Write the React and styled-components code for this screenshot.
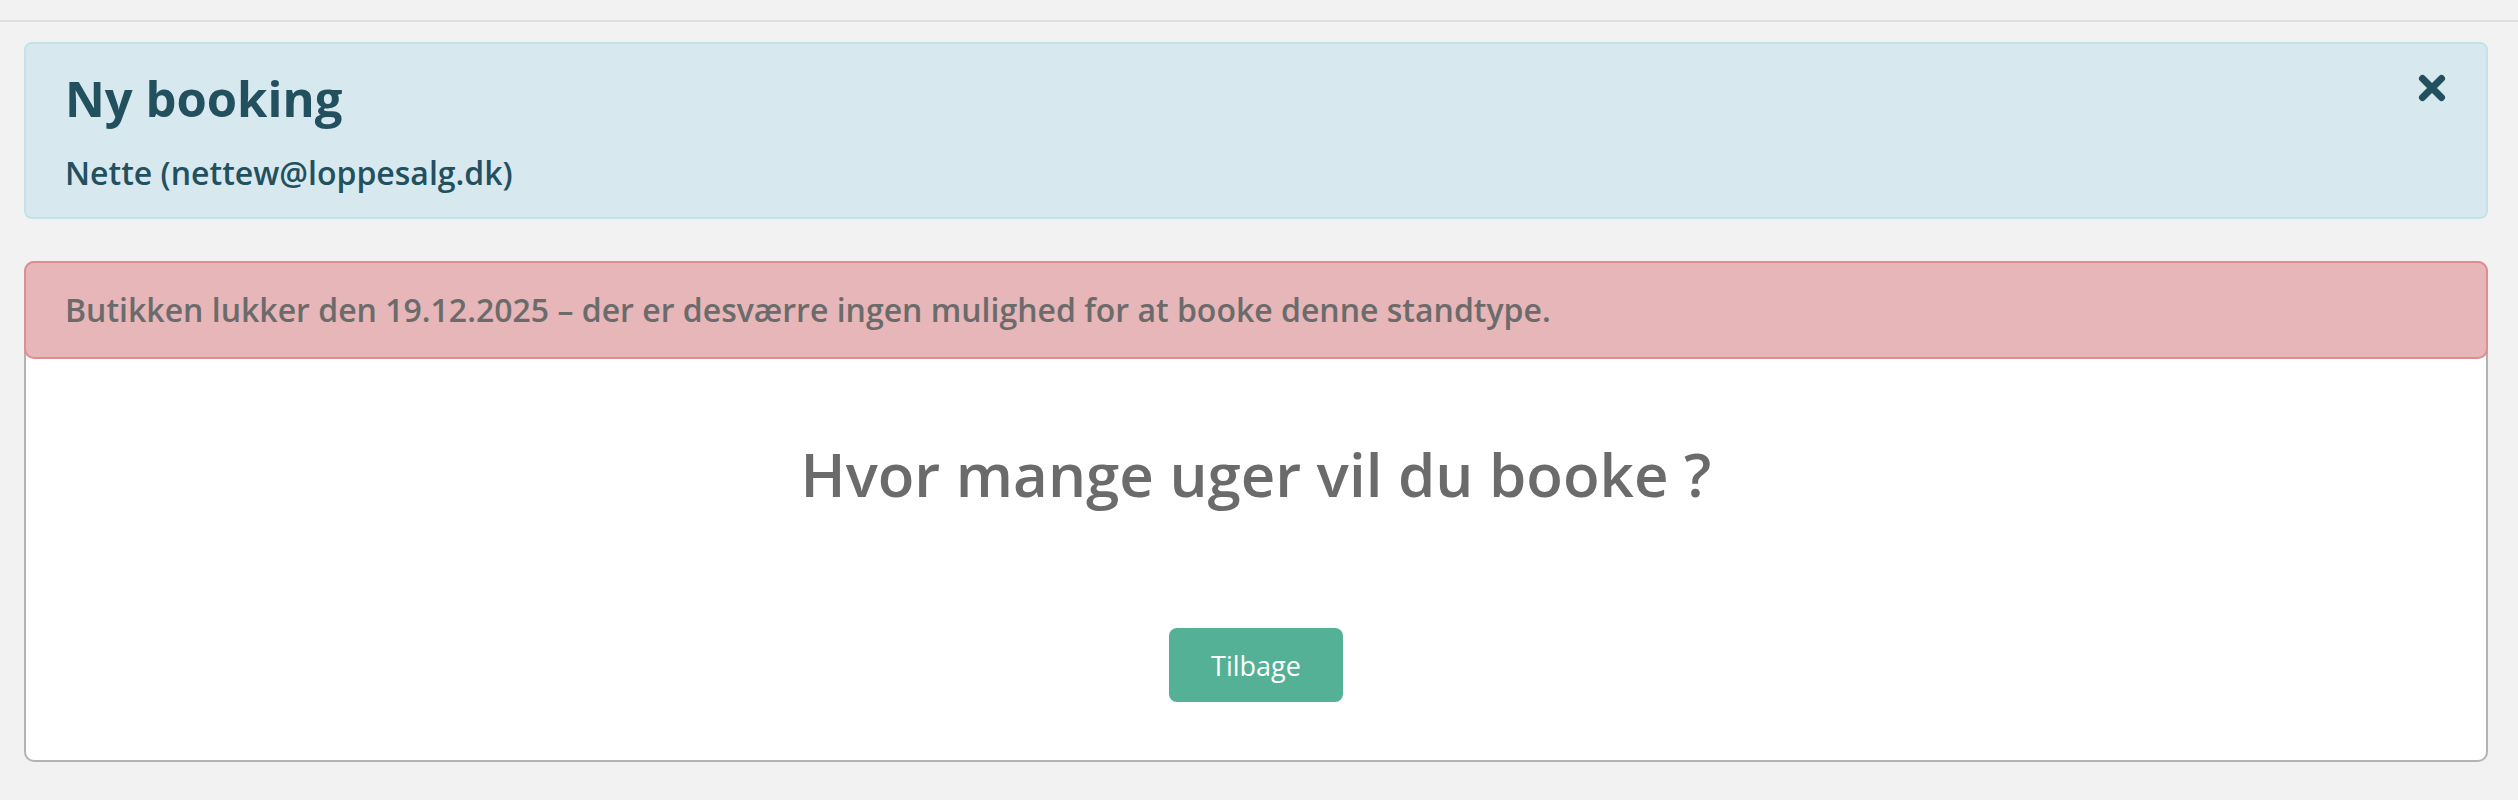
import React from "react";
import styled, { createGlobalStyle } from "styled-components";

const Global = createGlobalStyle`
  html, body {
    margin: 0;
    padding: 0;
    background: #f2f2f2;
    font-family: "Open Sans", "Noto Sans", sans-serif;
  }
  * { box-sizing: border-box; }
`;

const TopBar = styled.div`
  height: 22px;
  border-bottom: 2px solid #dfdfdf;
`;

const Page = styled.main`
  width: 2464px;
  margin-left: 24px;
  padding-top: 20px;
  display: flex;
  flex-direction: column;
  gap: 42px;
`;

const InfoBox = styled.section`
  position: relative;
  height: 177px;
  background: #d7e9ef;
  border: 2px solid #c3e2ea;
  border-radius: 8px;
  padding: 23px 44px 0 39px;
  color: #23505f;
`;

const Title = styled.h1`
  margin: 0;
  font-size: 49px;
  line-height: 62px;
  font-weight: 700;
`;

const Subtitle = styled.div`
  margin-top: 20px;
  font-size: 32px;
  line-height: 48px;
  font-weight: 600;
`;

const CloseButton = styled.button`
  position: absolute;
  top: 30px;
  right: 40px;
  width: 28px;
  height: 28px;
  padding: 0;
  border: none;
  background: none;
  color: #23505f;
  cursor: pointer;
  display: flex;
  svg { display: block; }
`;

const Card = styled.section`
  background: #fff;
  border: 2px solid #b3b3b3;
  border-radius: 10px;
  display: flex;
  flex-direction: column;
  align-items: center;
  padding-bottom: 58px;
`;

const Alert = styled.div`
  align-self: stretch;
  margin: -2px -2px 0;
  height: 98px;
  background: #e6b6b9;
  border: 2px solid #e08c90;
  border-radius: 10px;
  padding: 23px 39px;
  font-size: 32px;
  line-height: 48px;
  font-weight: 600;
  color: #6b6b6b;
`;

const Question = styled.h2`
  margin: 79px 0 0;
  font-size: 60px;
  line-height: 72px;
  font-weight: 600;
  color: #6b6b6b;
`;

const BackButton = styled.button`
  margin-top: 118px;
  width: 174px;
  height: 74px;
  border: none;
  border-radius: 8px;
  background: #54b195;
  color: #fff;
  font-family: inherit;
  font-size: 27px;
  font-weight: 400;
  cursor: pointer;
`;

export default function App() {
  return (
    <>
      <Global />
      <TopBar />
      <Page>
        <InfoBox>
          <Title>Ny booking</Title>
          <Subtitle>Nette (nettew@loppesalg.dk)</Subtitle>
          <CloseButton aria-label="Luk">
            <svg width="28" height="28" viewBox="0 0 28 28">
              <path
                d="M4.5 4.5 L23.5 23.5 M23.5 4.5 L4.5 23.5"
                stroke="currentColor"
                strokeWidth="7"
                strokeLinecap="round"
              />
            </svg>
          </CloseButton>
        </InfoBox>
        <Card>
          <Alert>
            Butikken lukker den 19.12.2025 – der er desværre ingen mulighed for at booke denne standtype.
          </Alert>
          <Question>Hvor mange uger vil du booke ?</Question>
          <BackButton>Tilbage</BackButton>
        </Card>
      </Page>
    </>
  );
}
